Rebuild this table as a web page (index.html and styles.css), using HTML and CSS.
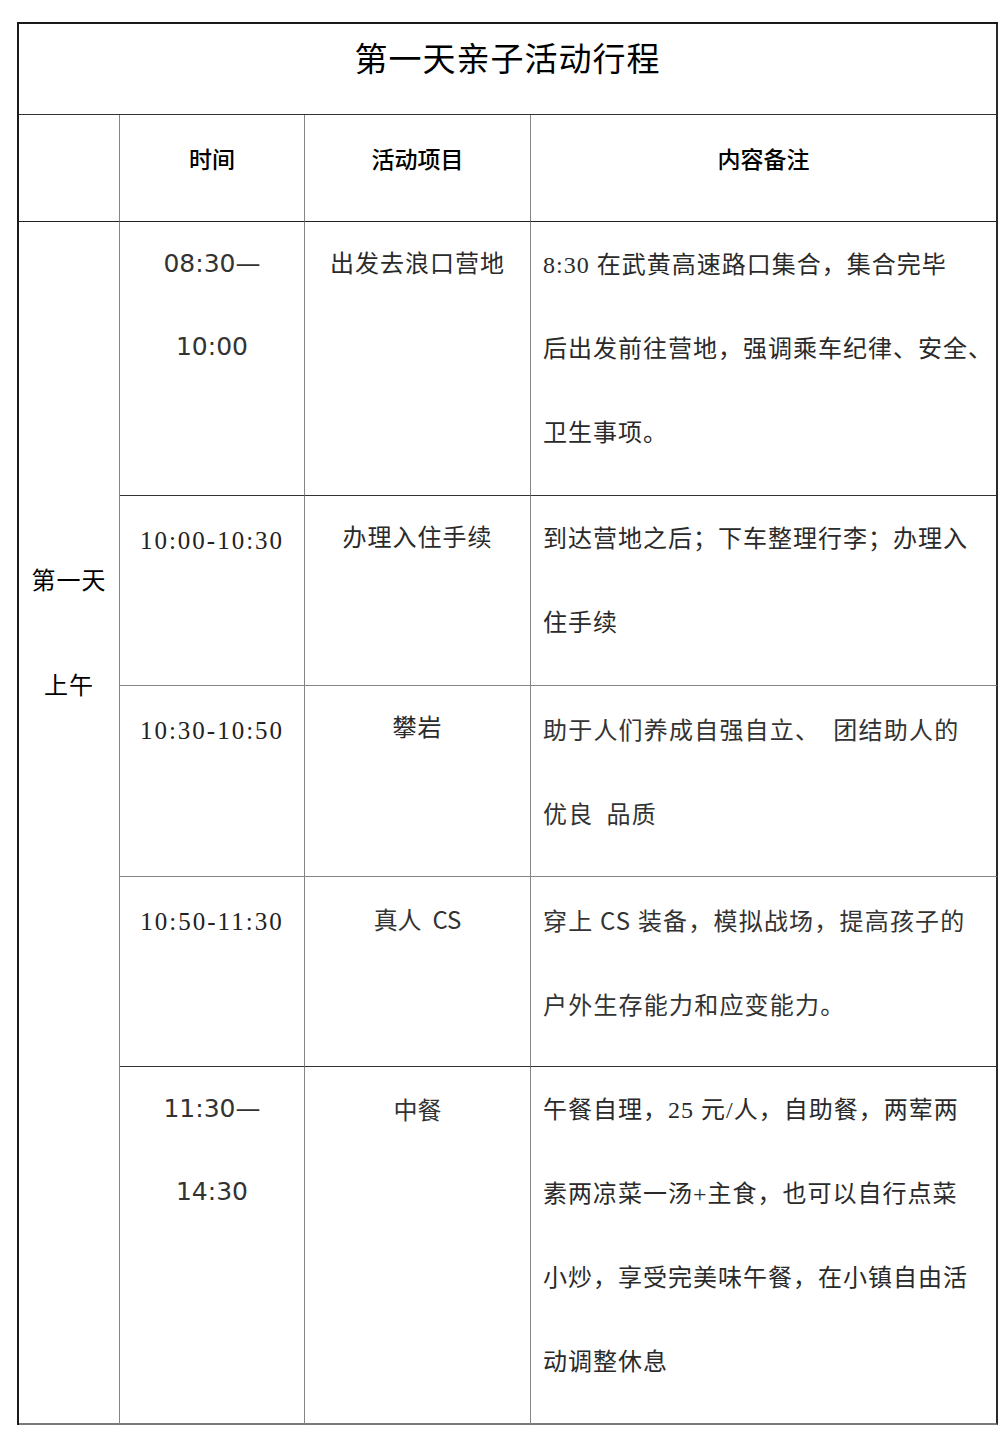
FILE: index.html
```html
<!DOCTYPE html>
<html lang="zh-CN">
<head>
<meta charset="utf-8">
<title>第一天亲子活动行程</title>
<link rel="stylesheet" href="styles.css">
</head>
<body>
<div class="sheet">
  <div class="cell title">第一天亲子活动行程</div>

  <div class="cell head blank"></div>
  <div class="cell head">时间</div>
  <div class="cell head">活动项目</div>
  <div class="cell head last">内容备注</div>

  <div class="cell day"><div>第一天</div><div>上午</div></div>

  <div class="cell time sans dark">08:30—<br>10:00</div>
  <div class="cell item serif dark">出发去浪口营地</div>
  <div class="cell note serif dark last">8:30 在武黄高速路口集合，集合完毕<br>后出发前往营地，强调乘车纪律、安全、<br>卫生事项。</div>

  <div class="cell time serif">10:00-10:30</div>
  <div class="cell item serif">办理入住手续</div>
  <div class="cell note serif last">到达营地之后；下车整理行李；办理入<br>住手续</div>

  <div class="cell time serif">10:30-10:50</div>
  <div class="cell item serif">攀岩</div>
  <div class="cell note sans last">助于人们养成自强自立、&nbsp; 团结助人的<br>优良&nbsp;&nbsp;品质</div>

  <div class="cell time serif dark">10:50-11:30</div>
  <div class="cell item sans dark">真人&nbsp; CS</div>
  <div class="cell note sans dark last">穿上 CS 装备，模拟战场，提高孩子的<br>户外生存能力和应变能力。</div>

  <div class="cell time sans bottom">11:30—<br>14:30</div>
  <div class="cell item sans bottom">中餐</div>
  <div class="cell note serif bottom last">午餐自理，25 元/人，自助餐，两荤两<br>素两凉菜一汤+主食，也可以自行点菜<br>小炒，享受完美味午餐，在小镇自由活<br>动调整休息</div>
</div>
</body>
</html>
```

FILE: styles.css
```css
* { box-sizing: border-box; }

html, body {
  margin: 0;
  padding: 0;
  background: #ffffff;
}

body {
  font-family: "Noto Sans CJK SC", sans-serif;
  color: #222;
}

.sheet {
  margin: 22px 0 0 17px;
  width: 981px;
  display: grid;
  grid-template-columns: 101px 185px 226px 467px;
  grid-template-rows: 91px 107px 274px 190px 191px 190px 358px;
  border-left: 2px solid #1a1a1a;
  border-top: 2px solid #1a1a1a;
}

.cell {
  border-right: 1px solid #858585;
  border-bottom: 1px solid #858585;
  overflow: hidden;
}

.cell.last {
  border-right: 2px solid #2a2a2a;
}

.title {
  grid-column: 1 / 5;
  border-right: 2px solid #2a2a2a;
  border-bottom: 1px solid #333;
  text-align: center;
  font-size: 33px;
  line-height: 50px;
  padding-top: 8px;
  color: #000;
  letter-spacing: 1px;
}

.head {
  text-align: center;
  font-size: 23px;
  line-height: 50px;
  padding-top: 18px;
  color: #000;
  font-weight: 500;
  border-bottom: 1px solid #222;
}

.day {
  grid-column: 1;
  grid-row: 3 / 8;
  border-bottom: 2px solid #7a7a7a;
  text-align: center;
  color: #000;
  font-size: 24px;
  line-height: 105px;
  padding-top: 304px;
  letter-spacing: 1px;
}

.time, .item {
  text-align: center;
  line-height: 84px;
  padding-top: 0;
  white-space: nowrap;
}

.note {
  line-height: 84px;
  padding: 1px 0 0 12px;
  white-space: nowrap;
}

.sans {
  font-family: "DejaVu Sans", "Noto Sans CJK SC", sans-serif;
  font-size: 24px;
  color: #333;
}

.time.sans {
  font-size: 25px;
  padding-top: 0;
  line-height: 83px;
}

.serif {
  font-family: "Liberation Serif", "Noto Sans CJK SC", serif;
  font-size: 24px;
  color: #2a2a2a;
  letter-spacing: 1px;
}

.time.serif {
  font-size: 25px;
  letter-spacing: 2px;
  color: #222;
  padding-top: 3px;
}

.note.sans {
  font-family: "Noto Sans CJK SC", sans-serif;
  letter-spacing: 1.2px;
}

.item.sans {
  font-family: "Noto Sans CJK SC", sans-serif;
}

.dark {
  border-bottom: 1px solid #333;
}

.bottom {
  border-bottom: 2px solid #7a7a7a;
}
```
